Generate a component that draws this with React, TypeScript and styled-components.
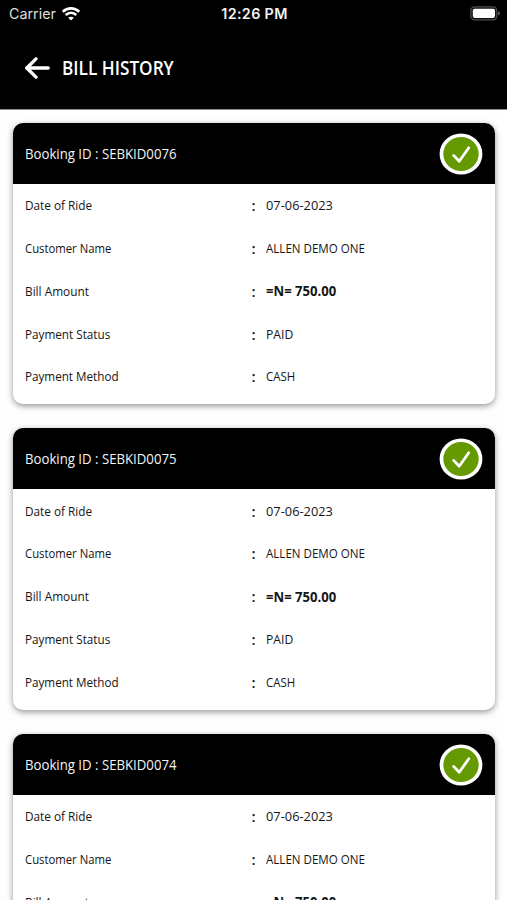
import React from 'react';
import styled, { createGlobalStyle } from 'styled-components';

const GlobalStyle = createGlobalStyle`
  * { box-sizing: border-box; }
  html, body { margin: 0; padding: 0; background: #fefefe; }
  body { overflow: hidden; font-family: "Open Sans", "Noto Sans", sans-serif; color: #151515; }
`;

const Screen = styled.div`
  height: 900px;
  overflow: hidden;
  display: flex;
  flex-direction: column;
`;

const TopBar = styled.header`
  flex: none;
  height: 110px;
  border-bottom: 1px solid #8a8a8a;
  background: #000;
  color: #fff;
`;

const StatusBar = styled.div`
  height: 27px;
  display: grid;
  grid-template-columns: 1fr auto 1fr;
  align-items: center;
  padding: 0 7px 0 9px;
  font-family: Inter, sans-serif;
`;

const Carrier = styled.div`
  display: flex;
  align-items: center;
  gap: 6px;
  font-size: 14.3px;
  color: #dedede;
`;

const Clock = styled.time`
  font-size: 14.3px;
  font-weight: 600;
  letter-spacing: 0.35px;
  color: #f2f2f2;
`;

const BatteryIcon = styled.svg`
  justify-self: end;
  display: block;
`;

const NavRow = styled.div`
  height: 82px;
  display: flex;
  align-items: center;
  padding-left: 24px;
  gap: 12px;
`;

const BackButton = styled.button`
  display: flex;
  padding: 0;
  border: 0;
  background: none;
  color: #fff;
`;

/* Narrows the typeface horizontally while keeping its x-height. */
const Narrow = styled.span<{ $scale: number }>`
  display: inline-block;
  white-space: nowrap;
  transform: scaleX(${p => p.$scale});
  transform-origin: left center;
`;

const Title = styled.h1`
  margin: 0;
  font-size: 19.5px;
  font-weight: 600;
  line-height: 26px;
  color: #fff;
`;

const List = styled.main`
  flex: 1;
  min-height: 0;
  overflow: hidden;
  display: flex;
  flex-direction: column;
  gap: 24px;
  padding: 12.9px 12px 0 13px;
`;

const Card = styled.article`
  flex: none;
  height: 281.4px;
  border-radius: 10px;
  background: #fff;
  box-shadow: 0 2px 6px rgba(0, 0, 0, 0.42);
`;

const CardHeader = styled.div`
  height: 61px;
  display: flex;
  align-items: center;
  justify-content: space-between;
  padding: 0 12px;
  border-radius: 10px 10px 0 0;
  background: #000;
  color: #f4f4f4;
  font-size: 14.5px;
`;

const Fields = styled.div`
  display: grid;
  grid-auto-rows: 42.75px;
`;

const Row = styled.div`
  display: grid;
  grid-template-columns: 226px 15px 1fr;
  align-items: center;
  padding-left: 12px;
  font-size: 13.5px;
`;

const Colon = styled.span`
  padding-left: 0.5px;
  font-size: 15px;
  font-weight: 600;
`;

const Value = styled.span<{ $strong?: boolean }>`
  font-size: ${p => (p.$strong ? 14 : 13.5)}px;
  font-weight: ${p => (p.$strong ? 700 : 400)};
`;

const CheckIcon = styled.svg`
  display: block;
  margin-top: 1px;
`;

const Check = () => (
  <CheckIcon width="44" height="42" viewBox="0 0 44 42" aria-label="Paid">
    <ellipse cx="22" cy="21" rx="21.4" ry="20.6" fill="#fff" />
    <ellipse cx="22" cy="21" rx="17.7" ry="17" fill="#659900" />
    <path d="M14.6 22.4 20.2 28.2 29.8 14.8" fill="none" stroke="#fff" strokeWidth="2.8" strokeLinecap="round" strokeLinejoin="round" />
  </CheckIcon>
);

const Wifi = () => (
  <svg width="18" height="14" viewBox="0 0 18 14" fill="none" stroke="#fff" strokeWidth="2.6">
    <path d="M.8 4.8C5.5.2 12.5.2 17.2 4.8" />
    <path d="M3.7 8C6.8 5.1 11.2 5.1 14.3 8" />
    <path d="M9 13.6 6.2 10.7C7.8 9.3 10.2 9.3 11.8 10.7Z" fill="#fff" stroke="none" />
  </svg>
);

type Field = { label: string; labelScale: number; value: string; valueScale: number; strong?: boolean };

const fields: Field[] = [
  { label: 'Date of Ride', labelScale: 0.873, value: '07-06-2023', valueScale: 0.95 },
  { label: 'Customer Name', labelScale: 0.838, value: 'ALLEN DEMO ONE', valueScale: 0.857 },
  { label: 'Bill Amount', labelScale: 0.876, value: '=N= 750.00', valueScale: 0.937, strong: true },
  { label: 'Payment Status', labelScale: 0.867, value: 'PAID', valueScale: 0.9 },
  { label: 'Payment Method', labelScale: 0.864, value: 'CASH', valueScale: 0.85 },
];

const bookings = ['SEBKID0076', 'SEBKID0075', 'SEBKID0074'];

export default function App() {
  return (
    <Screen>
      <GlobalStyle />
      <TopBar>
        <StatusBar>
          <Carrier>Carrier <Wifi /></Carrier>
          <Clock>12:26 PM</Clock>
          <BatteryIcon width="30" height="15" viewBox="0 0 30 15">
            <rect x=".8" y=".8" width="26" height="13" rx="3.8" fill="#111" stroke="#4c4c4c" strokeWidth="1.3" />
            <rect x="2.8" y="2.7" width="22.2" height="9.2" rx="1.8" fill="#fff" />
            <path d="M28.2 5.2Q30 6 30 7.3T28.2 9.4Z" fill="#666" />
          </BatteryIcon>
        </StatusBar>
        <NavRow>
          <BackButton aria-label="Back">
            <svg width="26" height="22" viewBox="0 0 26 22" fill="none" stroke="currentColor" strokeWidth="3.3" strokeLinecap="round" strokeLinejoin="round">
              <path d="M12 1.8 2.8 11 12 20.2" />
              <path d="M3 11H24.2" />
            </svg>
          </BackButton>
          <Title><Narrow $scale={0.882}>BILL HISTORY</Narrow></Title>
        </NavRow>
      </TopBar>
      <List>
        {bookings.map(id => (
          <Card key={id}>
            <CardHeader>
              <Narrow $scale={0.91}>Booking ID : {id}</Narrow>
              <Check />
            </CardHeader>
            <Fields>
              {fields.map(f => (
                <Row key={f.label}>
                  <Narrow $scale={f.labelScale}>{f.label}</Narrow>
                  <Colon>:</Colon>
                  <Value $strong={f.strong}><Narrow $scale={f.valueScale}>{f.value}</Narrow></Value>
                </Row>
              ))}
            </Fields>
          </Card>
        ))}
      </List>
    </Screen>
  );
}
